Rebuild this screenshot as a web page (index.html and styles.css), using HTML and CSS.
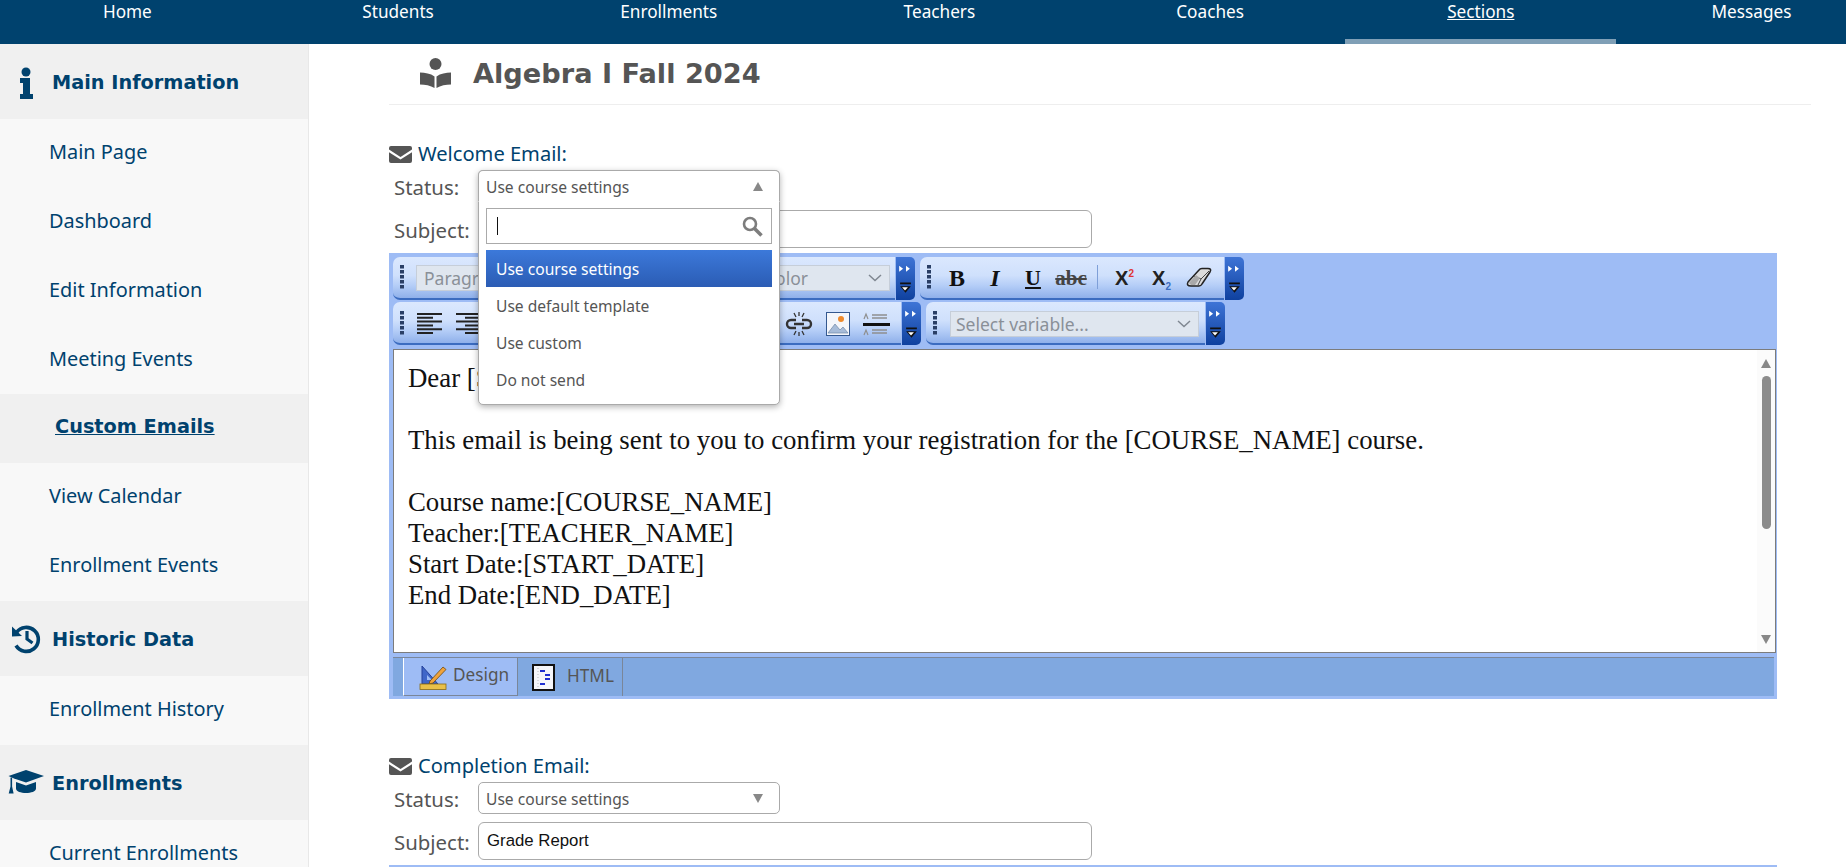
FILE: index.html
```html
<!DOCTYPE html>
<html lang="en">
<head>
<meta charset="utf-8">
<title>Algebra I Fall 2024</title>
<link rel="stylesheet" href="styles.css">
</head>
<body>
<svg class="defs" aria-hidden="true">
  <symbol id="i-mail" viewBox="0 0 23 17"><path d="M2 0h19a2 2 0 0 1 2 2v1.600l-11.500 7.400L0 3.600V2a2 2 0 0 1 2-2zM0 6.200l11.500 7.400L23 6.200V15a2 2 0 0 1-2 2H2a2 2 0 0 1-2-2z"/></symbol>
  <symbol id="i-grip" viewBox="0 0 5 24"><path d="M0 0h4v3.500H0zM0 5h4v3.500H0zM0 10h4v3.500H0zM0 15h4v3.500H0zM0 20h4v3.500H0z"/></symbol>
  <symbol id="i-chev" viewBox="0 0 14 8"><path d="M1 1l6 5.500L13 1" fill="none" stroke="#7f8791" stroke-width="1.500"/></symbol>
  <symbol id="i-strip" viewBox="0 0 19 44"><path d="M3 9l4 3-4 3zM10 9l4 3-4 3z" fill="#fff"/><path d="M4 26h11v1.800H4z" fill="#111"/><path d="M4 30h11l-5.500 6.500z" fill="#111"/><path d="M6 31h6l-3 3.200z" fill="#fff"/></symbol>
</svg>

<nav class="topnav">
  <a class="nav-item">Home</a>
  <a class="nav-item">Students</a>
  <a class="nav-item">Enrollments</a>
  <a class="nav-item">Teachers</a>
  <a class="nav-item">Coaches</a>
  <a class="nav-item nav-active">Sections</a>
  <a class="nav-item">Messages</a>
</nav>

<div class="layout">
  <aside class="sidebar">
    <div class="side-head">
      <span class="side-icon"><svg width="36" height="36" viewBox="0 0 36 36"><circle cx="18" cy="8" r="4.500"/><path d="M12 14h10v16h3v5H12v-5h3V19h-3z"/></svg></span>
      <span>Main Information</span>
    </div>
    <a class="side-link">Main Page</a>
    <a class="side-link">Dashboard</a>
    <a class="side-link">Edit Information</a>
    <a class="side-link">Meeting Events</a>
    <a class="side-link side-current">Custom Emails</a>
    <a class="side-link">View Calendar</a>
    <a class="side-link">Enrollment Events</a>
    <div class="side-head">
      <span class="side-icon"><svg width="36" height="36" viewBox="0 0 36 36"><path d="M8.500 12.500A12 12 0 1 1 8 25.500" fill="none" stroke-width="3.600"/><path d="M4 6.500l0 10 10-.5z"/><path d="M19 11v8l5.500 4" fill="none" stroke-width="3.200"/></svg></span>
      <span>Historic Data</span>
    </div>
    <a class="side-link">Enrollment History</a>
    <div class="side-head">
      <span class="side-icon"><svg width="38" height="26" viewBox="0 0 38 26"><path d="M19 1l18 6-18 6.500L7 9.500 1.500 7z"/><path d="M9 13l10 3.500L29 13v6.500c0 3-5 4.500-10 4.500s-10-1.500-10-4.500z"/><path d="M3.500 8.500h1.600v9l1.500 7H1.700l1.800-7z"/></svg></span>
      <span>Enrollments</span>
    </div>
    <a class="side-link">Current Enrollments</a>
    <a class="side-link">Past Enrollments</a>
  </aside>

  <main class="content">
    <header class="page-title">
      <svg class="title-icon" width="31" height="30" viewBox="0 0 31 30"><circle cx="15.500" cy="6" r="6"/><path d="M0 14.500c5 0 10.500 1 14.500 4V30C10.500 27.500 5 26.500 0 26.500zM31 14.500c-5 0-10.500 1-14.500 4V30c4-2.500 9.500-3.500 14.500-3.500z"/></svg>
      <h1>Algebra I Fall 2024</h1>
    </header>

    <section class="email">
      <h2 class="email-head"><svg class="mail-icon"><use href="#i-mail"/></svg>Welcome Email:</h2>
      <div class="field field-status">
        <label class="field-label">Status:</label>
        <div class="select-wrap">
          <div class="select select-open">
            <span>Use course settings</span>
            <span class="tri tri-up"></span>
          </div>
          <div class="dropdown">
            <div class="search">
              <span class="caret"></span>
              <svg width="21" height="21" viewBox="0 0 21 21"><circle cx="8" cy="8" r="6" fill="none" stroke="#7d7d7d" stroke-width="2.600"/><path d="M12.500 12.500l7 7" stroke="#7d7d7d" stroke-width="3.600"/></svg>
            </div>
            <div class="option option-on">Use course settings</div>
            <div class="option">Use default template</div>
            <div class="option">Use custom</div>
            <div class="option">Do not send</div>
          </div>
        </div>
      </div>
      <div class="field field-subject">
        <label class="field-label">Subject:</label>
        <input class="subject" type="text" value="">
      </div>

      <div class="editor">
        <div class="tb-row">
          <div class="tb tb-a">
            <svg class="grip"><use href="#i-grip"/></svg>
            <div class="tb-select tb-para"><span>Paragraph</span></div>
            <div class="tb-select tb-color"><span>Color</span><svg class="chev"><use href="#i-chev"/></svg></div>
          </div>
          <svg class="strip"><use href="#i-strip"/></svg>
          <div class="tb tb-b">
            <svg class="grip"><use href="#i-grip"/></svg>
            <span class="btn btn-b">B</span>
            <span class="btn btn-i">I</span>
            <span class="btn btn-u">U</span>
            <span class="btn btn-s">abc</span>
            <span class="tb-sep"></span>
            <span class="btn btn-x">X<sup>2</sup></span>
            <span class="btn btn-x">X<sub>2</sub></span>
            <span class="btn"><svg width="26" height="22" viewBox="0 0 26 22"><path d="M2 15L13 3q1-1.500 3-1.500h6q4 0 2 3.500L16 17q-1 2-3 2H5q-5 0-3-4z" fill="#dcdcdc" stroke="#222" stroke-width="1.500"/><path d="M8 9l7 3 8-8" fill="none" stroke="#444" stroke-width="1"/><path d="M15 12l-3 6" stroke="#444" stroke-width="1"/><path d="M3 16l7-8 4 3-5 7H5z" fill="#a9a9a9"/></svg></span>
          </div>
          <svg class="strip"><use href="#i-strip"/></svg>
        </div>
        <div class="tb-row">
          <div class="tb tb-c">
            <svg class="grip"><use href="#i-grip"/></svg>
            <svg class="tb-ico" width="25" height="21" viewBox="0 0 25 21"><path d="M0 1h25M0 4.800h16M0 8.600h25M0 12.400h16M0 16.200h25M0 20h16" stroke="#222" stroke-width="2"/></svg>
            <svg class="tb-ico" width="25" height="21" viewBox="0 0 25 21"><path d="M0 1h25M9 4.800h16M0 8.600h25M9 12.400h16M0 16.200h25M9 20h16" stroke="#222" stroke-width="2"/></svg>
            <div class="tb-tail">
              <svg width="28" height="24" viewBox="0 0 28 24"><path d="M11 8H6a4 4 0 0 0 0 8h5M17 8h5a4 4 0 0 1 0 8h-5M9 12h10" fill="none" stroke="#333" stroke-width="2.400"/><path d="M9 1l2 4M14 0v4M19 1l-2 4M9 23l2-4M14 24v-4M19 23l-2-4" stroke="#333" stroke-width="1.300"/></svg>
              <svg width="24" height="24" viewBox="0 0 24 24"><rect x=".5" y=".5" width="23" height="23" fill="#f4f6fb" stroke="#34588f"/><circle cx="15" cy="7" r="3" fill="#ee8a2c"/><path d="M2 21l7-9 5 6 3-3 5 6z" fill="#a7bcd9" stroke="#6f86a7" stroke-width=".7"/></svg>
              <svg width="27" height="24" viewBox="0 0 27 24"><path d="M0 11h27v3H0z" fill="#111"/><path d="M9 3h15M9 6h15M9 18h15M9 21h15" stroke="#8f8f8f" stroke-width="1.400"/><path d="M1 7l2-5 2 5M1 23l2-5 2 5" fill="none" stroke="#8f8f8f" stroke-width="1.200"/></svg>
            </div>
          </div>
          <svg class="strip"><use href="#i-strip"/></svg>
          <div class="tb tb-d">
            <svg class="grip"><use href="#i-grip"/></svg>
            <div class="tb-select tb-var"><span>Select variable...</span><svg class="chev"><use href="#i-chev"/></svg></div>
          </div>
          <svg class="strip"><use href="#i-strip"/></svg>
        </div>

        <div class="body-box">
          <div class="body-text">
            <p>Dear [STUDENT_NAME]</p>
            <p>&nbsp;</p>
            <p>This email is being sent to you to confirm your registration for the [COURSE_NAME] course.</p>
            <p>&nbsp;</p>
            <p>Course name:[COURSE_NAME]</p>
            <p>Teacher:[TEACHER_NAME]</p>
            <p>Start Date:[START_DATE]</p>
            <p>End Date:[END_DATE]</p>
          </div>
          <div class="scroll">
            <span class="tri tri-up"></span>
            <span class="thumb"></span>
            <span class="tri tri-down tri-end"></span>
          </div>
        </div>

        <div class="tabs">
          <div class="tab tab-on">
            <svg width="28" height="27" viewBox="0 0 28 27"><path d="M3 21V3l16 18z" fill="#3f66c8" stroke="#24409a" stroke-width="1"/><path d="M8 17v-5l5 5z" fill="#9ebcf5"/><path d="M11 18L24 4l3 2.500L14 20l-4 1z" fill="#f0a33c" stroke="#6e4a10" stroke-width=".8"/><rect x="1" y="21" width="26" height="5.500" fill="#e8c04a" stroke="#8a6a12" stroke-width=".8"/></svg>
            <span>Design</span>
          </div>
          <div class="tab">
            <svg width="23" height="27" viewBox="0 0 23 27"><rect x="1" y="1" width="21" height="25" fill="#f5f6fa" stroke="#111" stroke-width="2"/><path d="M8 7h5M13 11h5M13 15h5M8 20h5" stroke="#1f2fd0" stroke-width="2"/><path d="M6 4v20" stroke="#bbb" stroke-width="1" stroke-dasharray="1 2"/></svg>
            <span>HTML</span>
          </div>
        </div>
      </div>
    </section>

    <section class="email">
      <h2 class="email-head"><svg class="mail-icon"><use href="#i-mail"/></svg>Completion Email:</h2>
      <div class="field field-status">
        <label class="field-label">Status:</label>
        <div class="select-wrap">
          <div class="select">
            <span>Use course settings</span>
            <span class="tri tri-down"></span>
          </div>
        </div>
      </div>
      <div class="field field-subject">
        <label class="field-label">Subject:</label>
        <input class="subject" type="text" value="Grade Report">
      </div>
      <div class="editor editor-stub"></div>
    </section>
  </main>
</div>
</body>
</html>
```
FILE: styles.css
```css
* { box-sizing: border-box; }
html, body { margin: 0; height: 867px; overflow: hidden; background: #fff; }
body { font-family: "Noto Sans", sans-serif; color: #555; }
.defs { position: absolute; width: 0; height: 0; }

.topnav { display: grid; grid-template-columns: repeat(7, 270.700px); height: 44px; margin-left: -8px; background: #00426e; width: 1854px; overflow: hidden; }
.nav-item { height: 44px; line-height: 24px; font-size: 17.200px; text-align: center; color: #fff; }
.nav-active { text-decoration: underline; border-bottom: 5px solid #7f9fb6; }

.layout { display: flex; height: 823px; }
.sidebar { flex: none; width: 309px; background: #f8f8f8; border-right: 1px solid #e8e8e8; overflow: hidden; }
.side-head { display: flex; align-items: center; height: 75px; padding-top: 2px; background: #f0f0f0; font-family: "DejaVu Sans", sans-serif; font-weight: 700; font-size: 19.300px; color: #00426e; }
.side-icon { width: 52px; display: flex; justify-content: center; flex: none; margin-top: -2px; }
.side-icon svg { fill: #00426e; stroke: #00426e; stroke-width: 0; }
.side-link { display: block; height: 68.857px; line-height: 66px; padding-left: 49px; font-size: 19.900px; color: #00426e; }
.side-current { background: #f0f0f0; padding-left: 55px; font-family: "DejaVu Sans", sans-serif; font-weight: 700; font-size: 19.300px; text-decoration: underline; }

.content { flex: none; width: 1537px; padding-left: 80px; }
.page-title { display: flex; align-items: center; width: 1422px; height: 61px; padding: 0 0 1px 31px; border-bottom: 1px solid #eee; }
.title-icon { fill: #555; margin-right: 22px; margin-top: -2px; }
.page-title h1 { margin: -1px 0 0; font-family: "DejaVu Sans", sans-serif; font-size: 27.200px; font-weight: 700; color: #555; }

.email { margin-top: 36px; margin-bottom: 54px; }
.email + .email { margin-top: 0; }
.email-head { display: flex; align-items: center; height: 24px; margin: 0 0 5px; font-size: 20.100px; font-weight: 400; color: #00426e; }
.mail-icon { width: 23px; height: 17px; fill: #555; margin-right: 6px; margin-top: 2px; }

.field { display: flex; align-items: center; }
.field-status { height: 32px; margin-bottom: 8px; }
.field-subject { height: 38px; margin-bottom: 5px; }
.field-label { flex: none; width: 89px; padding-left: 5px; padding-top: 2px; font-size: 20.400px; color: #555; }

.select-wrap { position: relative; width: 302px; height: 32px; }
.select { display: flex; align-items: center; justify-content: space-between; height: 32px; padding: 1px 16px 0 7px; border: 1px solid #aaa; border-radius: 5px; font-size: 15.600px; color: #555; background: #fff; }
.select-open { position: relative; z-index: 3; border-bottom-color: #fff; border-radius: 5px 5px 0 0; }
.tri { display: block; width: 0; height: 0; border-left: 5.500px solid transparent; border-right: 5.500px solid transparent; }
.tri-up { border-bottom: 9px solid #888; }
.tri-down { border-top: 9px solid #888; }

.dropdown { position: absolute; z-index: 2; top: 0; left: 0; width: 302px; height: 235px; padding: 37px 7px 0; border: 1px solid #aaa; border-radius: 5px; background: #fff; box-shadow: 0 2px 6px rgba(0, 0, 0, .3); }
.search { display: flex; align-items: center; justify-content: space-between; height: 36px; padding: 0 8px 0 10px; border: 1px solid #aaa; margin-bottom: 6px; }
.caret { width: 1px; height: 18px; background: #111; }
.option { height: 37px; line-height: 38px; padding-left: 10px; font-size: 15.600px; color: #555; }
.option-on { color: #fff; background: linear-gradient(#3c79da, #2b5cb4); }

.subject { width: 614px; height: 38px; padding: 0 8px; border: 1px solid #aaa; border-radius: 6px; outline: 0; font-family: "Liberation Sans", sans-serif; font-size: 16.800px; color: #111; background: #fff; }

.editor { width: 1388px; height: 446px; padding: 4px 1px 3px 4px; background: #9ebcf5; }
.editor-stub { height: 40px; }
.tb-row { display: flex; height: 43px; margin-bottom: 2px; }
.tb-row + .tb-row { margin-bottom: 4px; }
.tb { flex: none; display: flex; align-items: flex-start; height: 43px; padding-top: 8px; border-radius: 7px 0 0 7px; border-bottom: 2px solid #3b6cc0; background: linear-gradient(#dbe8fe 0, #cfe0fc 45%, #b4cdf7 70%, #8fb0ea 100%); }
.tb-c, .tb-d { padding-top: 9px; }
.tb-a { width: 502px; }
.tb-b { width: 304px; margin-left: 5px; }
.tb-c { width: 508px; }
.tb-d { width: 279px; margin-left: 5px; }
.grip { flex: none; width: 5px; height: 24px; margin: 0 5px 0 7px; fill: #2a3f66; }
.strip { flex: none; width: 19px; height: 43px; margin-left: 1px; border-radius: 0 5px 5px 0; background: linear-gradient(#3e74d6, #0f419f); }

.tb-select { display: flex; align-items: center; justify-content: space-between; height: 26px; padding: 0 7px; border: 1px solid #c6ced9; background: #dfe6ef; font-size: 17.500px; color: #8a9098; }
.tb-para { width: 217px; margin-left: 6px; }
.tb-color { width: 255px; margin-left: 2px; padding-left: 128px; }
.tb-var { width: 249px; margin-left: 7px; padding-left: 5px; }
.chev { width: 14px; height: 8px; }

.btn { flex: none; display: flex; align-items: center; justify-content: center; width: 38px; height: 26px; font-family: "Liberation Serif", serif; font-size: 24px; font-weight: 700; color: #111; }
.tb-b .grip { margin-right: 6px; }
.btn-i { font-style: italic; }
.btn-u { text-decoration: underline; font-size: 22px; }
.btn-s { font-size: 21px; font-weight: 700; text-decoration: line-through; color: #444; }
.btn-x { display: block; width: 37px; line-height: 26px; text-align: center; font-family: "Liberation Sans", sans-serif; font-size: 20px; color: #222; }
.btn-x sup { font-size: 10px; color: #d33; line-height: 0; }
.btn-x sub { font-size: 10px; color: #3b6cc0; line-height: 0; }
.tb-sep { flex: none; width: 1px; height: 24px; margin: 0 8px 0 7px; background: #7e9fd8; }
.tb-ico { flex: none; margin: 2px 14px 0 0; }
.tb-c .grip { margin-right: 12px; }
.tb-tail { display: flex; gap: 13px; align-items: center; margin-left: auto; padding-right: 11px; height: 26px; }

.body-box { display: flex; height: 304px; border: 1px solid #7c7c7c; background: #fff; }
.body-text { flex: 1; padding: 13px 14px; font-family: "Liberation Serif", serif; font-size: 26.800px; line-height: 31px; color: #111; white-space: nowrap; }
.body-text p { margin: 0; }
.scroll { flex: none; width: 18px; display: flex; flex-direction: column; align-items: center; padding-top: 9px; background: #fbfbfb; }
.thumb { width: 9px; height: 153px; margin-top: 8px; border-radius: 5px; background: #8c8c8c; }
.tri-end { margin-top: 106px; }

.tabs { display: flex; width: 1381px; height: 39px; margin-top: 4px; padding-left: 10px; background: #80a8e0; border-top: 1px solid #7a8699; }
.tab { display: flex; align-items: center; height: 38px; font-size: 17.200px; color: #555; border-right: 1px solid #7a8699; }
.tab span { margin-top: -4px; }
.tab:first-child { width: 115px; padding-left: 15px; gap: 6px; }
.tab:nth-child(2) { width: 105px; padding-left: 14px; gap: 12px; }
.tab-on { background: #9ebcf5; border-left: 1px solid #fff; border-bottom: 1px solid #7a8699; }
```
